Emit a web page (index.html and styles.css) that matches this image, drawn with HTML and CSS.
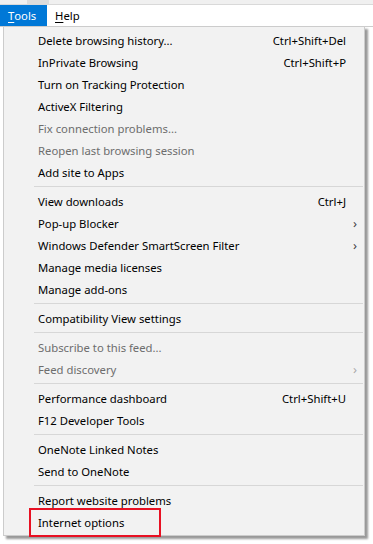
FILE: index.html
```html
<!DOCTYPE html>
<html lang="en">
<head>
    <meta charset="UTF-8">
    <title>Tools menu</title>
    <link rel="stylesheet" href="styles.css">
</head>
<body>
<div id="strip"><span class="tab"></span></div>
<div id="menubar">
    <span class="title active"><u>T</u>ools</span>
    <span class="title"><u>H</u>elp</span>
</div>
<div id="dropdown">
    <div class="item"><span class="label">Delete browsing history...</span><span class="key">Ctrl+Shift+Del</span></div>
    <div class="item"><span class="label">InPrivate Browsing</span><span class="key">Ctrl+Shift+P</span></div>
    <div class="item"><span class="label">Turn on Tracking Protection</span></div>
    <div class="item"><span class="label">ActiveX Filtering</span></div>
    <div class="item disabled"><span class="label">Fix connection problems...</span></div>
    <div class="item disabled"><span class="label">Reopen last browsing session</span></div>
    <div class="item"><span class="label">Add site to Apps</span></div>
    <div class="sep"></div>
    <div class="item"><span class="label">View downloads</span><span class="key">Ctrl+J</span></div>
    <div class="item"><span class="label">Pop-up Blocker</span><span class="arrow">&#8250;</span></div>
    <div class="item"><span class="label">Windows Defender SmartScreen Filter</span><span class="arrow">&#8250;</span></div>
    <div class="item"><span class="label">Manage media licenses</span></div>
    <div class="item"><span class="label">Manage add-ons</span></div>
    <div class="sep"></div>
    <div class="item"><span class="label">Compatibility View settings</span></div>
    <div class="sep"></div>
    <div class="item disabled"><span class="label">Subscribe to this feed...</span></div>
    <div class="item disabled"><span class="label">Feed discovery</span><span class="arrow">&#8250;</span></div>
    <div class="sep"></div>
    <div class="item"><span class="label">Performance dashboard</span><span class="key">Ctrl+Shift+U</span></div>
    <div class="item"><span class="label">F12 Developer Tools</span></div>
    <div class="sep"></div>
    <div class="item"><span class="label">OneNote Linked Notes</span></div>
    <div class="item"><span class="label">Send to OneNote</span></div>
    <div class="sep"></div>
    <div class="item"><span class="label">Report website problems</span></div>
    <div class="item"><span class="label">Internet options</span></div>
</div>
<div id="callout"></div>
</body>
</html>
```

FILE: styles.css
```css
body {
    margin: 0;
    background-color: #fff;
    font-family: "Noto Sans", "Liberation Sans", sans-serif;
    font-size: 11.3px;
    color: #000;
    position: relative;
    width: 373px;
    height: 544px;
    overflow: hidden;
}
#strip {
    height: 4px;
    background-color: #f0f0f0;
    border-bottom: 1px solid #d9d9d9;
}
#strip .tab {
    display: block;
    margin-left: 27px;
    width: 22px;
    height: 4px;
    background-color: #dcdcdc;
}
#menubar {
    display: flex;
    height: 21px;
    border-bottom: 1px solid #cccccc;
}
#menubar .title {
    display: flex;
    align-items: center;
    padding: 0 8px 0 8px;
}
#menubar .title.active {
    background-color: #0078d7;
    color: #fff;
    width: 31px;
}
#menubar u {
    text-decoration-thickness: 1px;
    text-underline-offset: 2px;
}
#dropdown {
    margin-left: 3px;
    width: 360px;
    margin-top: -1px;
    padding: 2px 0;
    background-color: #f2f2f2;
    border: 1px solid #cccccc;
    box-shadow: 3px 3px 2px rgba(0, 0, 0, 0.4);
}
.item {
    display: grid;
    grid-template-columns: 1fr auto 18px;
    align-items: center;
    height: 22px;
    padding-left: 34px;
}
.item .key {
    grid-column: 2;
}
.item .arrow {
    grid-column: 3;
    font-size: 13px;
    color: #444;
    text-align: center;
}
.item.disabled {
    color: #6d6d6d;
}
.item.disabled .arrow {
    color: #aaa;
}
.sep {
    height: 1px;
    margin: 3px 1px 3px 30px;
    background-color: #d7d7d7;
}
#callout {
    position: absolute;
    left: 29px;
    top: 508px;
    width: 128px;
    height: 25px;
    border: 2px solid #e81123;
}
```
